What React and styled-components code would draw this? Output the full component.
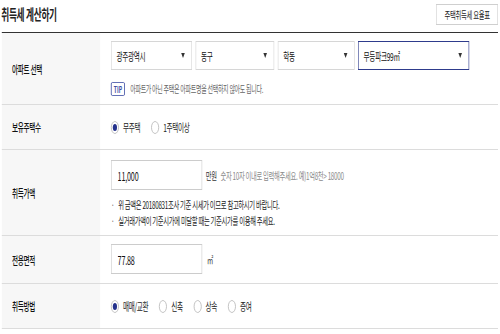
import React from "react";
import styled, { createGlobalStyle } from "styled-components";

const Global = createGlobalStyle`
  html, body { margin: 0; padding: 0; background: #fff; overflow: hidden; }
  body { font-family: "Noto Sans CJK KR", "Noto Sans", sans-serif; color: #222; }
  * { box-sizing: border-box; }
`;

/* The reference is a wide page squeezed horizontally: render at 833px and scale the page once. */
const Page = styled.div`
  width: 833px;
  padding: 0 3px 0 3px;
  transform: scaleX(0.6);
  transform-origin: 0 0;
  letter-spacing: -0.5px;
`;

const Header = styled.div`
  display: flex;
  justify-content: space-between;
  align-items: center;
  height: 26px;
  margin-bottom: 6px;
  padding-top: 1px;
`;

const Title = styled.h1`
  margin: 0 0 0 -1px;
  font-size: 14.5px;
  font-weight: 700;
  color: #222;
`;

const RateButton = styled.button`
  width: 103px;
  height: 21px;
  margin-top: 2px;
  border: 1px solid #cfcfcf;
  background: #fff;
  font-family: inherit;
  font-size: 10.5px;
  letter-spacing: -0.5px;
  color: #222;
  padding: 0;
`;

const Table = styled.div`
  border-top: 1px solid #333;
`;

const Row = styled.div`
  display: grid;
  grid-template-columns: 164px 1fr;
  border-bottom: 1px solid #dcdcdc;
  min-height: ${(p) => p.$h}px;
`;

const Label = styled.div`
  background: #f7f7f7;
  display: flex;
  align-items: center;
  padding-left: 17px;
  font-size: 11px;
  font-weight: 500;
  color: #111;
`;

const Cell = styled.div`
  padding: ${(p) => p.$pad || "0"} 0 ${(p) => p.$padB || "0"} 18px;
  display: flex;
  flex-direction: column;
  justify-content: ${(p) => (p.$center ? "center" : "flex-start")};
`;

const SelectRow = styled.div`
  display: flex;
  gap: 6px;
`;

const Select = styled.div`
  width: ${(p) => p.$w}px;
  height: 29px;
  border: 1px solid ${(p) => (p.$focus ? "#2e3b8c" : "#d6d6d6")};
  background: #fff;
  display: flex;
  align-items: center;
  justify-content: space-between;
  padding: 0 11px 0 8px;
  font-size: 11px;
  color: #111;
`;

const Arrow = styled.span`
  width: 0;
  height: 0;
  border-left: 3.5px solid transparent;
  border-right: 3.5px solid transparent;
  border-top: 5px solid #333;
`;

const TipLine = styled.div`
  display: flex;
  align-items: center;
  gap: 9px;
  margin-top: 11px;
`;

const TipBadge = styled.span`
  width: 23px;
  height: 14px;
  border: 1px solid #3c4ca3;
  border-radius: 2px;
  color: #3c4ca3;
  font-size: 8.5px;
  font-weight: 700;
  letter-spacing: 0;
  display: flex;
  align-items: center;
  justify-content: center;
`;

const TipText = styled.span`
  font-size: 10px;
  color: #666;
`;

const RadioGroup = styled.div`
  display: flex;
  align-items: center;
`;

const RadioItem = styled.label`
  display: flex;
  align-items: center;
  gap: 7px;
  margin-right: 18px;
  font-size: 11px;
  color: #222;
`;

const RadioCircle = styled.span`
  width: 13px;
  height: 13px;
  border-radius: 50%;
  border: 1px solid #b5b5b5;
  background: #fff;
  display: flex;
  align-items: center;
  justify-content: center;
  &::after {
    content: "";
    width: 7px;
    height: 7px;
    border-radius: 50%;
    background: ${(p) => (p.$on ? "#24318c" : "transparent")};
  }
`;

const InputLine = styled.div`
  display: flex;
  align-items: center;
`;

const TextInput = styled.input`
  width: 152px;
  height: 30px;
  border: 1px solid #cccccc;
  padding: 0 10px;
  font-family: inherit;
  font-size: 12px;
  letter-spacing: -0.3px;
  color: #111;
  background: #fff;
  outline: none;
`;

const Unit = styled.span`
  margin-left: ${(p) => p.$ml || 6}px;
  font-size: 10.5px;
  color: #333;
`;

const Hint = styled.span`
  margin-left: 6px;
  font-size: 10.5px;
  color: #8a8a8a;
`;

const Notes = styled.ul`
  list-style: none;
  margin: 7px 0 0;
  padding: 0;
`;

const Note = styled.li`
  display: flex;
  gap: 8px;
  font-size: 10.5px;
  line-height: 16px;
  color: #222;
  &::before {
    content: "·";
    color: #666;
    width: 4px;
  }
`;

const Radio = ({ on, children }) => (
  <RadioItem>
    <RadioCircle $on={on} />
    {children}
  </RadioItem>
);

export default function App() {
  return (
    <>
      <Global />
      <Page>
        <Header>
          <Title>취득세 계산하기</Title>
          <RateButton>주택취득세 요율표</RateButton>
        </Header>
        <Table>
          <Row $h={70}>
            <Label>아파트 선택</Label>
            <Cell $pad="8px" $padB="8px">
              <SelectRow>
                <Select $w={135}>
                  광주광역시 <Arrow />
                </Select>
                <Select $w={131}>
                  동구 <Arrow />
                </Select>
                <Select $w={128}>
                  학동 <Arrow />
                </Select>
                <Select $w={185} $focus>
                  무등파크99㎡ <Arrow />
                </Select>
              </SelectRow>
              <TipLine>
                <TipBadge>TIP</TipBadge>
                <TipText>아파트가 아닌 주택은 아파트명을 선택하지 않아도 됩니다.</TipText>
              </TipLine>
            </Cell>
          </Row>
          <Row $h={45}>
            <Label>보유주택수</Label>
            <Cell $center>
              <RadioGroup>
                <Radio on>무주택</Radio>
                <Radio>1주택이상</Radio>
              </RadioGroup>
            </Cell>
          </Row>
          <Row $h={85}>
            <Label>취득가액</Label>
            <Cell $pad="10px" $padB="6px">
              <InputLine>
                <TextInput defaultValue="11,000" readOnly />
                <Unit>만원</Unit>
                <Hint>숫자 10자 이내로 입력해주세요. 예)1억8천&gt; 18000</Hint>
              </InputLine>
              <Notes>
                <Note>위 금액은 20180831조사 기준 시세가 이므로 참고하시기 바랍니다.</Note>
                <Note>실거래가액이 기준시가에 미달할 때는 기준시가를 이용해 주세요.</Note>
              </Notes>
            </Cell>
          </Row>
          <Row $h={47}>
            <Label>전용면적</Label>
            <Cell $pad="8px" $padB="9px">
              <InputLine>
                <TextInput defaultValue="77.88" readOnly />
                <Unit $ml={8}>㎡</Unit>
              </InputLine>
            </Cell>
          </Row>
          <Row $h={45}>
            <Label>취득방법</Label>
            <Cell $center>
              <RadioGroup>
                <Radio on>매매/교환</Radio>
                <Radio>신축</Radio>
                <Radio>상속</Radio>
                <Radio>증여</Radio>
              </RadioGroup>
            </Cell>
          </Row>
        </Table>
      </Page>
    </>
  );
}
